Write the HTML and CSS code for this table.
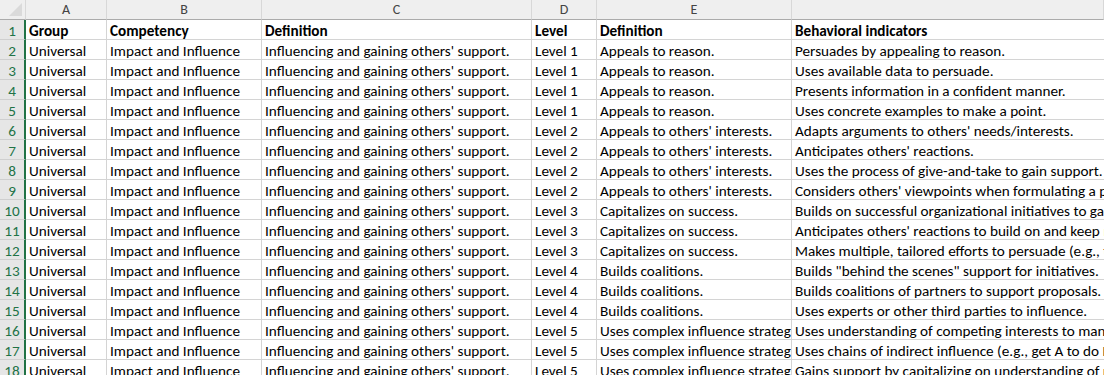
FILE: index.html
```html
<!DOCTYPE html>
<html>
<head>
<meta charset="utf-8">
<link rel="stylesheet" href="styles.css">
</head>
<body>
<div class="sheet">
  <div class="row colhead">
    <div class="corner"><span class="tri"></span></div>
    <div class="ch">A</div><div class="ch">B</div><div class="ch">C</div><div class="ch">D</div><div class="ch">E</div><div class="ch last"></div>
  </div>
  <div class="row bold"><div class="rh">1</div><div class="c">Group</div><div class="c">Competency</div><div class="c">Definition</div><div class="c">Level</div><div class="c">Definition</div><div class="c">Behavioral indicators</div></div>
  <div class="row"><div class="rh">2</div><div class="c">Universal</div><div class="c">Impact and Influence</div><div class="c">Influencing and gaining others' support.</div><div class="c">Level 1</div><div class="c">Appeals to reason.</div><div class="c">Persuades by appealing to reason.</div></div>
  <div class="row"><div class="rh">3</div><div class="c">Universal</div><div class="c">Impact and Influence</div><div class="c">Influencing and gaining others' support.</div><div class="c">Level 1</div><div class="c">Appeals to reason.</div><div class="c">Uses available data to persuade.</div></div>
  <div class="row"><div class="rh">4</div><div class="c">Universal</div><div class="c">Impact and Influence</div><div class="c">Influencing and gaining others' support.</div><div class="c">Level 1</div><div class="c">Appeals to reason.</div><div class="c">Presents information in a confident manner.</div></div>
  <div class="row"><div class="rh">5</div><div class="c">Universal</div><div class="c">Impact and Influence</div><div class="c">Influencing and gaining others' support.</div><div class="c">Level 1</div><div class="c">Appeals to reason.</div><div class="c">Uses concrete examples to make a point.</div></div>
  <div class="row"><div class="rh">6</div><div class="c">Universal</div><div class="c">Impact and Influence</div><div class="c">Influencing and gaining others' support.</div><div class="c">Level 2</div><div class="c">Appeals to others' interests.</div><div class="c">Adapts arguments to others' needs/interests.</div></div>
  <div class="row"><div class="rh">7</div><div class="c">Universal</div><div class="c">Impact and Influence</div><div class="c">Influencing and gaining others' support.</div><div class="c">Level 2</div><div class="c">Appeals to others' interests.</div><div class="c">Anticipates others' reactions.</div></div>
  <div class="row"><div class="rh">8</div><div class="c">Universal</div><div class="c">Impact and Influence</div><div class="c">Influencing and gaining others' support.</div><div class="c">Level 2</div><div class="c">Appeals to others' interests.</div><div class="c">Uses the process of give-and-take to gain support.</div></div>
  <div class="row"><div class="rh">9</div><div class="c">Universal</div><div class="c">Impact and Influence</div><div class="c">Influencing and gaining others' support.</div><div class="c">Level 2</div><div class="c">Appeals to others' interests.</div><div class="c">Considers others' viewpoints when formulating a position.</div></div>
  <div class="row"><div class="rh">10</div><div class="c">Universal</div><div class="c">Impact and Influence</div><div class="c">Influencing and gaining others' support.</div><div class="c">Level 3</div><div class="c">Capitalizes on success.</div><div class="c">Builds on successful organizational initiatives to gain support.</div></div>
  <div class="row"><div class="rh">11</div><div class="c">Universal</div><div class="c">Impact and Influence</div><div class="c">Influencing and gaining others' support.</div><div class="c">Level 3</div><div class="c">Capitalizes on success.</div><div class="c">Anticipates others' reactions to build on and keep momentum.</div></div>
  <div class="row"><div class="rh">12</div><div class="c">Universal</div><div class="c">Impact and Influence</div><div class="c">Influencing and gaining others' support.</div><div class="c">Level 3</div><div class="c">Capitalizes on success.</div><div class="c">Makes multiple, tailored efforts to persuade (e.g., tailors presentations).</div></div>
  <div class="row"><div class="rh">13</div><div class="c">Universal</div><div class="c">Impact and Influence</div><div class="c">Influencing and gaining others' support.</div><div class="c">Level 4</div><div class="c">Builds coalitions.</div><div class="c">Builds "behind the scenes" support for initiatives.</div></div>
  <div class="row"><div class="rh">14</div><div class="c">Universal</div><div class="c">Impact and Influence</div><div class="c">Influencing and gaining others' support.</div><div class="c">Level 4</div><div class="c">Builds coalitions.</div><div class="c">Builds coalitions of partners to support proposals.</div></div>
  <div class="row"><div class="rh">15</div><div class="c">Universal</div><div class="c">Impact and Influence</div><div class="c">Influencing and gaining others' support.</div><div class="c">Level 4</div><div class="c">Builds coalitions.</div><div class="c">Uses experts or other third parties to influence.</div></div>
  <div class="row"><div class="rh">16</div><div class="c">Universal</div><div class="c">Impact and Influence</div><div class="c">Influencing and gaining others' support.</div><div class="c">Level 5</div><div class="c">Uses complex influence strategies.</div><div class="c">Uses understanding of competing interests to manage outcomes.</div></div>
  <div class="row"><div class="rh">17</div><div class="c">Universal</div><div class="c">Impact and Influence</div><div class="c">Influencing and gaining others' support.</div><div class="c">Level 5</div><div class="c">Uses complex influence strategies.</div><div class="c">Uses chains of indirect influence (e.g., get A to do B so C will do D).</div></div>
  <div class="row"><div class="rh">18</div><div class="c">Universal</div><div class="c">Impact and Influence</div><div class="c">Influencing and gaining others' support.</div><div class="c">Level 5</div><div class="c">Uses complex influence strategies.</div><div class="c">Gains support by capitalizing on understanding of political forces.</div></div>
</div>
</body>
</html>
```

FILE: styles.css
```css
html, body {
  margin: 0;
  padding: 0;
  background: #ffffff;
  overflow: hidden;
}
.sheet {
  width: 1104px;
  height: 375px;
  overflow: hidden;
  font-family: Carlito, Lato, "Liberation Sans", sans-serif;
  font-size: 15.2px;
  color: #000;
}
.row {
  display: grid;
  grid-template-columns: 26px 81px 155px 270px 65px 195px 1fr;
  height: 20px;
}
.row > div {
  box-sizing: border-box;
  height: 20px;
  border-right: 1px solid #d4d4d4;
  border-bottom: 1px solid #d4d4d4;
  white-space: nowrap;
  overflow: hidden;
}
.row > .c:last-child {
  border-right: none;
}
.c {
  padding: 1px 0 0 3px;
  line-height: 20px;
}
.bold .c {
  font-weight: 700;
}
.colhead > div {
  background: #efefef;
  border-bottom: 1px solid #ababab;
  border-right: 1px solid #d8d8d8;
  color: #444;
  text-align: center;
  line-height: 20px;
  font-size: 14px;
}
.colhead > .corner {
  position: relative;
  background: #efefef;
}
.tri {
  position: absolute;
  right: 3px;
  bottom: 3px;
  width: 0;
  height: 0;
  border-left: 13px solid transparent;
  border-bottom: 13px solid #dadada;
}
.row > .rh {
  background: #e6e6e6;
  color: #217346;
  text-align: center;
  line-height: 20px;
  padding-top: 1px;
  font-size: 15.2px;
  border-right: 2px solid #217346;
  border-bottom: 1px solid #cfcfcf;
}
```
